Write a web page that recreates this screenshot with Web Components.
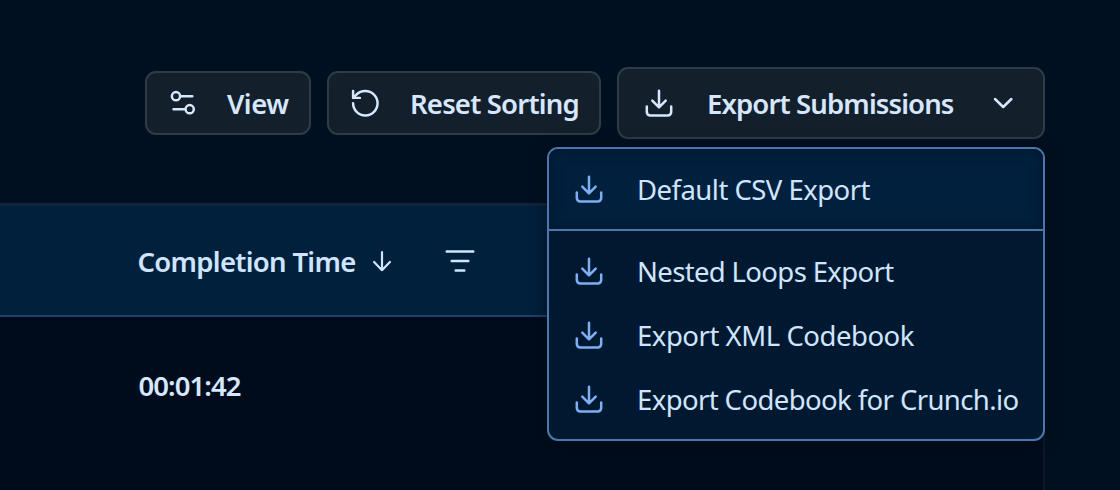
<!DOCTYPE html>
<html lang="en">
<head>
<meta charset="utf-8">
<title>Submissions</title>
<style>
html, body { margin: 0; height: 100%; overflow: hidden; background: #001021; }
body { font-family: "Noto Sans", "Open Sans", sans-serif; font-size: 27.5px; color: #d6e7ff; }
</style>
</head>
<body>
<submissions-page></submissions-page>
<script>
const icons = {
  download: [28, 28, '<path d="M14 1.8v16.4M7.3 11.6l6.7 6.8 6.7-6.8M1.8 17.4v5.7a3.4 3.4 0 0 0 3.4 3.4h17.600a3.4 3.4 0 0 0 3.4-3.4v-5.7"/>'],
  view: [28, 28, '<circle cx="7" cy="7.2" r="4.1"/><path d="M11.5 7.2H23.3M4.5 20.2H16"/><circle cx="20.7" cy="20.2" r="4.1"/>'],
  reset: [32, 32, '<path transform="scale(1.36)" stroke-width="1.8" d="M3 12a9 9 0 1 0 9-9 9.75 9.75 0 0 0-6.74 2.74L3 8M3 3v5h5"/>'],
  chevron: [20, 12, '<path d="M2 2l8.2 8L18.400 2"/>'],
  down: [20, 22, '<path stroke-width="2.2" d="M10 2.2v18M2.1 12l7.9 8.200 7.9-8.200"/>'],
  filter: [32, 24, '<path stroke-width="2.5" d="M2.700 2.500h26.600M7.700 12h16.600M11.700 21.400h8.600"/>']
};
class UiIcon extends HTMLElement {
  connectedCallback() {
    const [w, h, body] = icons[this.getAttribute('name')];
    this.attachShadow({ mode: 'open' }).innerHTML = `<style>
      :host { display: block; flex: none; width: ${w}px; height: ${h}px; }
      svg { display: block; overflow: visible; }
    </style><svg width="${w}" height="${h}" viewBox="0 0 ${w} ${h}" fill="none" stroke="currentColor" stroke-width="2.5" stroke-linecap="round" stroke-linejoin="round">${body}</svg>`;
  }
}
customElements.define('ui-icon', UiIcon);

const define = (name, markup) => customElements.define(name, class extends HTMLElement {
  constructor() {
    super();
    this.attachShadow({ mode: 'open' }).innerHTML = markup;
  }
});

define('tool-button', `<style>
  :host { display: flex; box-sizing: border-box; height: 64px; align-items: center; border: 2px solid #2f3c45; border-radius: 11px; background: #13202c; font-weight: 600; line-height: 36px; white-space: nowrap; }
  .label { flex: 1; padding-top: 2px; }
</style><slot name="icon"></slot><span class="label"><slot></slot></span><slot name="end"></slot>`);

define('menu-item', `<style>
  :host { display: flex; box-sizing: border-box; height: 64px; align-items: center; padding-left: 26px; gap: 34px; line-height: 36px; white-space: nowrap; color: #d0e5ff; }
  ui-icon { color: #7eaff2; position: relative; top: -1px; }
  :host([active]) { height: 82px; border-bottom: 2px solid #4c77ad; background: #00203d; box-shadow: inset 0 0 10px 4px #001a33; border-radius: 9px 9px 0 0; }
  :host([active]) .label { padding-top: 2px; }
  :host([active]) ui-icon { top: 0; }
</style><ui-icon name="download"></ui-icon><span class="label"><slot></slot></span>`);

define('export-menu', `<style>
  :host { display: block; box-sizing: border-box; width: 498px; height: 294px; border: 2px solid #4c77ad; border-radius: 11px; background: #001931; box-shadow: 0 0 16px 2px rgba(0,8,16,.45); }
  .first { padding-bottom: 9px; }
</style><div class="first"><slot name="first"></slot></div><slot></slot>`);

define('tool-bar', `<style>
  :host { display: flex; box-sizing: border-box; height: 203px; padding: 67px 75px 0 0; gap: 16px; justify-content: flex-end; align-items: flex-start; }
  .view { width: 166px; margin-top: 4px; letter-spacing: -.5px; }
  .reset { width: 274px; margin-top: 4px; letter-spacing: -.82px; }
  .anchor { position: relative; width: 428px; }
  .export { height: 72px; letter-spacing: -.87px; }
  .view ui-icon { margin: 0 30px 1px 22px; }
  .reset ui-icon { margin: 0 29px 0 20px; }
  .export ui-icon[slot=icon] { margin: 0 34px 0 26px; }
  .export ui-icon[slot=end] { margin-right: 30px; }
  export-menu { position: absolute; right: 0; top: 80px; z-index: 2; }
  .csv { letter-spacing: -.53px; }
  .loops { letter-spacing: -.64px; }
  .xml { letter-spacing: -.46px; }
  .crunch { letter-spacing: -.6px; }
</style>
<tool-button class="view"><ui-icon slot="icon" name="view"></ui-icon><span>View</span></tool-button>
<tool-button class="reset"><ui-icon slot="icon" name="reset"></ui-icon><span>Reset Sorting</span></tool-button>
<div class="anchor">
  <tool-button class="export"><ui-icon slot="icon" name="download"></ui-icon><span>Export Submissions</span><ui-icon slot="end" name="chevron"></ui-icon></tool-button>
  <export-menu>
    <menu-item slot="first" class="csv" active><span>Default CSV Export</span></menu-item>
    <menu-item class="loops"><span>Nested Loops Export</span></menu-item>
    <menu-item class="xml"><span>Export XML Codebook</span></menu-item>
    <menu-item class="crunch"><span>Export Codebook for Crunch.io</span></menu-item>
  </export-menu>
</div>`);

define('submission-table', `<style>
  :host { display: block; box-sizing: border-box; width: 1045px; height: 287px; border-right: 2px solid #0b1a28; background: #000c1c; font-weight: 600; line-height: 36px; white-space: nowrap; }
  .head { display: flex; box-sizing: border-box; height: 114px; align-items: center; padding-left: 137.500px; border-top: 3px solid #12233a; border-bottom: 2px solid #1d426d; background: #00203c; color: #cfe5ff; }
  .title { width: 234.500px; padding-top: 2px; letter-spacing: -.7px; }
  .filter { margin-left: 52px; }
  .row { height: 138px; display: flex; align-items: center; padding-left: 138.500px; }
  .time { letter-spacing: -.95px; }
</style>
<div class="head"><span class="title"><span>Completion Time</span></span><ui-icon name="down"></ui-icon><ui-icon class="filter" name="filter"></ui-icon></div>
<div class="row"><span class="time">00:01:42</span></div>`);

define('submissions-page', `<style>:host { display: block; width: 1120px; height: 490px; }</style>
<tool-bar></tool-bar><submission-table></submission-table>`);
</script>
</body>
</html>
